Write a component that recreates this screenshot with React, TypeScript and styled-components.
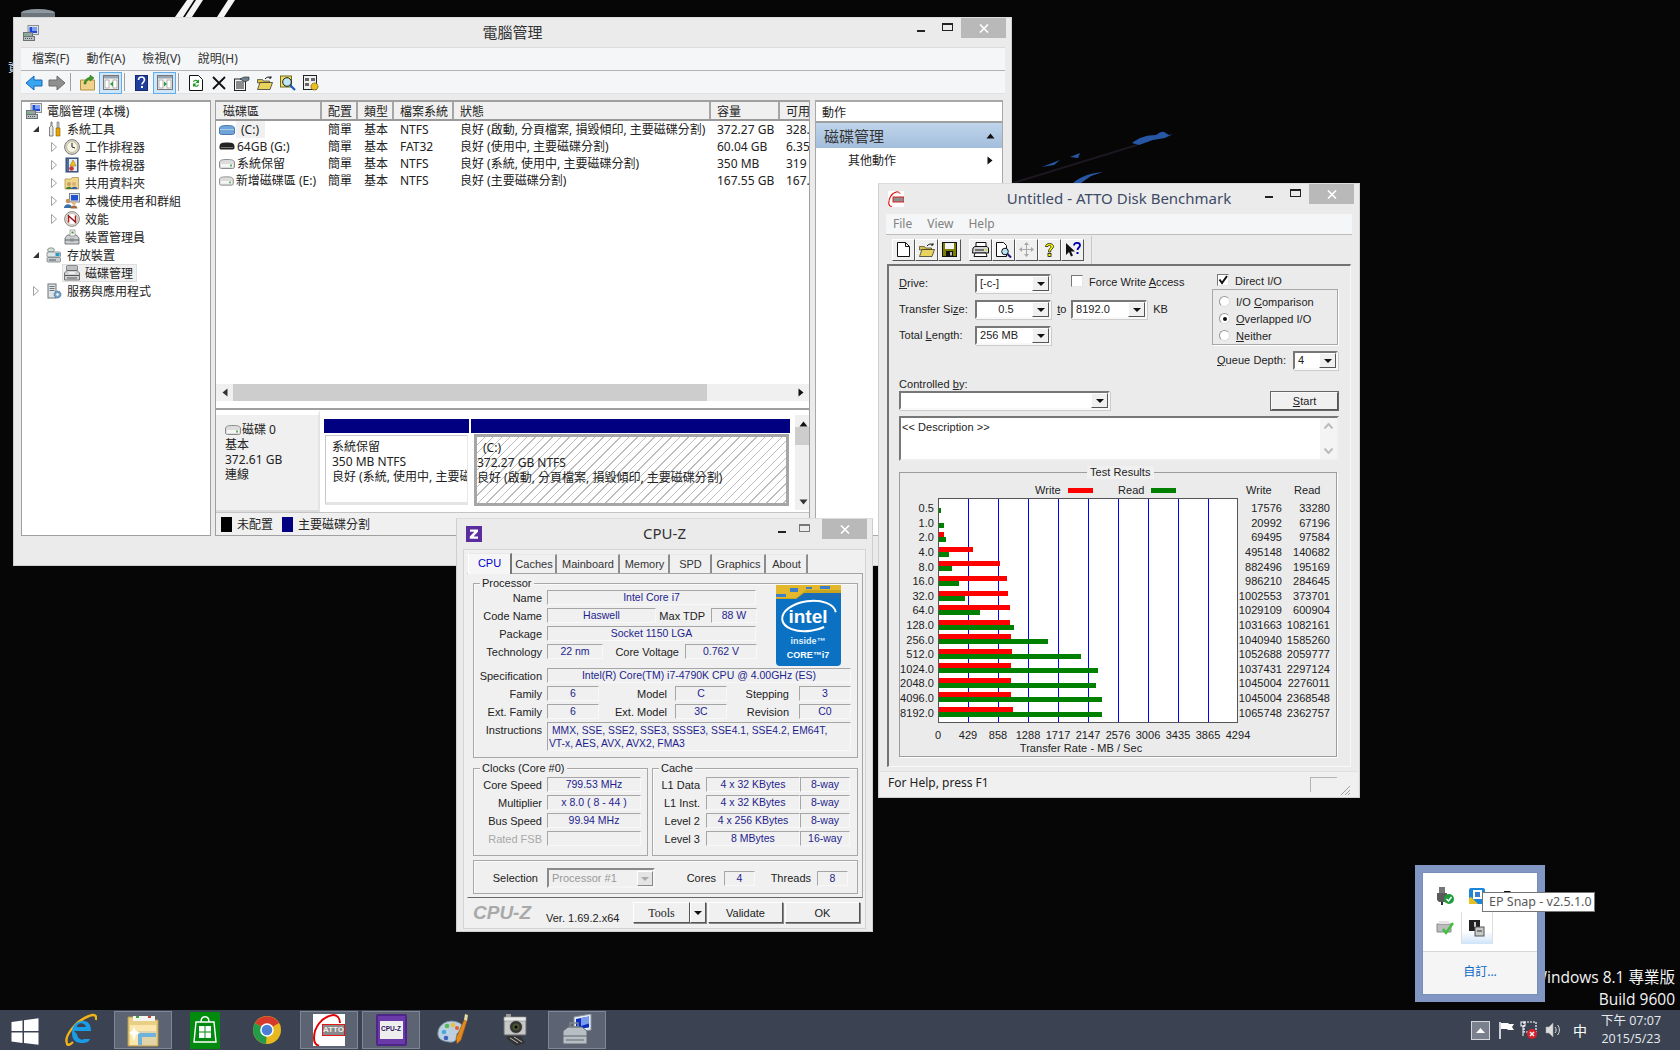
import React from "react";
import styled, { createGlobalStyle } from "styled-components";

const UI = `"Noto Sans", "Noto Sans CJK TC", sans-serif`;
const ARIAL = `"Liberation Sans", "Noto Sans CJK TC", sans-serif`;

const Global = createGlobalStyle`
  html, body { margin: 0; padding: 0; background: #050505; }
  body { font-family: ${UI}; overflow: hidden; }
  * { box-sizing: border-box; }
`;

const Desktop = styled.div`
  position: relative; width: 1680px; height: 1050px; overflow: hidden; background: #060606;
`;
const Wallpaper = styled.svg`position: absolute; inset: 0;`;
const DesktopLabel = styled.span`
  position: absolute; left: 8px; top: 58px; font-size: 12px; color: #dfe8ff;
`;
const Edition = styled.div`
  position: absolute; right: 5px; top: 966px; text-align: right; color: #f4f4f4;
  font-size: 15.5px; line-height: 22px; font-family: "Open Sans", "Noto Sans CJK TC", sans-serif;
`;

/* ---------- window chrome ---------- */
const Frame = styled.section<{ $x: number; $y: number; $w: number; $h: number }>`
  position: absolute; left: ${p => p.$x}px; top: ${p => p.$y}px; width: ${p => p.$w}px; height: ${p => p.$h}px;
  background: #ebebeb; border: 1px solid #cfcfcf; border-top-color: #dcdcdc; display: flex; flex-direction: column;
`;
const TitleBar = styled.header`
  height: 29px; flex: none; display: grid; grid-template-columns: 1fr auto 1fr; align-items: start;
`;
const TitleIcon = styled.div`padding: 6px 0 0 9px; height: 29px;`;
const TitleText = styled.h1<{ $color?: string; $size?: number }>`
  margin: 0; font-weight: 400; font-size: ${p => p.$size ?? 15}px; line-height: 29px; color: ${p => p.$color ?? "#333"};
`;
const ControlRow = styled.div`display: flex; justify-content: flex-end; align-items: flex-start; padding-right: 5px;`;
const CtlBtn = styled.div<{ $w: number }>`
  width: ${p => p.$w}px; height: 20px; display: flex; align-items: center; justify-content: center;
`;
const MinGlyph = styled.i`display: block; width: 8px; height: 2px; background: #222; margin-top: 6px;`;
const MaxGlyph = styled.i<{ $soft?: boolean }>`
  display: block; width: 11px; height: 8px; margin-top: -3px; border: 1px solid ${p => p.$soft ? "#777" : "#222"};
  border-top-width: 2px;
`;
const CloseBtn = styled.div<{ $gap?: number }>`
  width: 45px; height: 20px; margin-left: ${p => p.$gap ?? 0}px; background: #b9b9b9;
  display: flex; align-items: center; justify-content: center;
`;

const Controls = ({ compact, }: { compact?: boolean }) => (
  <ControlRow>
    <CtlBtn $w={compact ? 22 : 27}><MinGlyph /></CtlBtn>
    <CtlBtn $w={compact ? 22 : 27}><MaxGlyph $soft={compact} /></CtlBtn>
    <CloseBtn $gap={compact ? 7 : 0}>
      <svg width="10" height="9" viewBox="0 0 10 9"><path d="M1 .5 9 8.5M9 .5 1 8.5" stroke="#fff" strokeWidth="1.6" /></svg>
    </CloseBtn>
  </ControlRow>
);

/* ---------- icons ---------- */
type Ic = { s?: number };
const CompIcon = ({ s = 16 }: Ic) => (
  <svg width={s} height={s} viewBox="0 0 16 16">
    <rect x="5" y="0.5" width="10.5" height="9" fill="#dfe3e8" stroke="#8a8f96" />
    <rect x="6.5" y="2" width="7.5" height="6" fill="#1f49d8" />
    <rect x="9" y="2" width="5" height="4" fill="#7fa0ee" />
    <rect x="0.5" y="7.5" width="9" height="4" fill="#9aa4a8" stroke="#6a7478" />
    <rect x="0.5" y="11.5" width="11" height="4" fill="#b8bfc2" stroke="#6a7478" />
    <path d="M2 13.5h8" stroke="#555" strokeDasharray="1 1" />
    <rect x="1.5" y="9" width="2" height="1.5" fill="#4c4" />
  </svg>
);
const ToolsIcon = () => (
  <svg width="16" height="16" viewBox="0 0 16 16">
    <path d="M5 1v4l-1.5 1v9H7V6L6 5V1z" fill="#e8e8e8" stroke="#666" strokeWidth=".8" />
    <path d="M11 1h2v6h-2z" fill="#c9c9c9" stroke="#666" strokeWidth=".6" />
    <path d="M10 7h4v8h-4z" fill="#e6a400" stroke="#8a6000" strokeWidth=".6" />
  </svg>
);
const ClockIcon = () => (
  <svg width="16" height="16" viewBox="0 0 16 16">
    <circle cx="8" cy="8" r="7.4" fill="#d9d9d0" stroke="#7b7b7b" />
    <circle cx="8" cy="8" r="5.4" fill="#f5f5ea" stroke="#b0a060" strokeWidth=".6" />
    <path d="M8 4v4l3 1" fill="none" stroke="#222" />
  </svg>
);
const EventIcon = () => (
  <svg width="16" height="16" viewBox="0 0 16 16">
    <rect x="2" y="1" width="12" height="14" fill="#4f6d9e" stroke="#2e466e" />
    <rect x="5" y="2" width="8" height="12" fill="#e6e9f2" />
    <path d="M9 3 12 9H6z" fill="#f2c218" stroke="#8c6c08" strokeWidth=".5" />
    <circle cx="7.5" cy="11.5" r="2.3" fill="#d23434" />
  </svg>
);
const SharedIcon = () => (
  <svg width="16" height="16" viewBox="0 0 16 16">
    <path d="M1 4h6l1-1.5h6.5V14H1z" fill="#f0d68a" stroke="#b2964c" strokeWidth=".8" />
    <circle cx="5" cy="9" r="2" fill="#c8a060" /><path d="M2 14c0-3 6-3 6 0z" fill="#3a7d3a" />
    <circle cx="10" cy="9" r="2" fill="#d8b078" /><path d="M7.5 14c0-3 6-3 6 0z" fill="#3a5da8" />
  </svg>
);
const UsersIcon = () => (
  <svg width="16" height="16" viewBox="0 0 16 16">
    <rect x="5.5" y="0.5" width="10" height="8.5" fill="#dce2ea" stroke="#7c8790" />
    <rect x="7" y="2" width="7" height="5.5" fill="#2152cf" />
    <circle cx="4" cy="8" r="2.3" fill="#c9925c" /><path d="M0 15c0-5 8-5 8 0z" fill="#3c6ea8" />
    <circle cx="10" cy="10" r="2" fill="#e2b280" /><path d="M6.5 15.5c0-4 7-4 7 0z" fill="#a26a38" />
  </svg>
);
const PerfIcon = () => (
  <svg width="16" height="16" viewBox="0 0 16 16">
    <circle cx="8" cy="8" r="7.4" fill="#dfdfd5" stroke="#8a8a80" />
    <circle cx="8" cy="8" r="5.5" fill="#fff" stroke="#999" strokeWidth=".5" />
    <path d="M4.5 11.5V4.8L11.5 11V4.5" fill="none" stroke="#c01818" strokeWidth="1.5" />
    <path d="M4 4 12 12" stroke="#2a2a2a" strokeWidth=".7" />
  </svg>
);
const DevIcon = () => (
  <svg width="16" height="16" viewBox="0 0 16 16">
    <path d="M1 9 3.5 6h9L15 9v6H1z" fill="#cbcfd2" stroke="#5d6367" strokeWidth=".8" />
    <path d="M1 11h14" stroke="#5d6367" />
    <rect x="6" y="1" width="5" height="6" fill="#fafafa" stroke="#888" strokeWidth=".7" />
    <rect x="7.5" y="2.5" width="2" height="2" fill="#3b983b" />
    <rect x="6" y="9.5" width="4" height="3" fill="#8b9093" />
  </svg>
);
const StorageIcon = () => (
  <svg width="16" height="16" viewBox="0 0 16 16">
    <ellipse cx="5" cy="3" rx="3.5" ry="2.2" fill="#cfe0d2" stroke="#6f7c72" strokeWidth=".7" />
    <rect x="1" y="5" width="13.5" height="5" rx="1" fill="#dfe4e6" stroke="#68747a" strokeWidth=".7" />
    <rect x="9.5" y="6" width="4" height="3" fill="#2b9ac8" />
    <rect x="1" y="10.5" width="13.5" height="4.5" rx="1" fill="#c9ced0" stroke="#68747a" strokeWidth=".7" />
    <path d="M3 13h7" stroke="#556" />
  </svg>
);
const DiskMgmtIcon = () => (
  <svg width="16" height="16" viewBox="0 0 16 16">
    <rect x="2.5" y="0.5" width="11" height="5.5" rx="1" fill="#bcc0c2" stroke="#666" strokeWidth=".7" />
    <path d="M.5 8 3 5.5h10L15.5 8v7H.5z" fill="#ced2d4" stroke="#555" strokeWidth=".8" />
    <path d="M1 10.5h14M3 13h10" stroke="#555" />
    <rect x="5" y="7" width="6" height="2" fill="#f0f0f0" />
  </svg>
);
const ServicesIcon = () => (
  <svg width="16" height="16" viewBox="0 0 16 16">
    <rect x="2" y="1" width="8" height="14" fill="#dfe3e6" stroke="#6c7478" />
    <path d="M3.5 3.5h5M3.5 5.5h5M3.5 7.5h5" stroke="#6a7479" />
    <circle cx="11.5" cy="11.5" r="3.4" fill="#7aa3c6" stroke="#3f6f94" strokeDasharray="1.4 .7" />
    <circle cx="11.5" cy="11.5" r="1.2" fill="#fff" />
  </svg>
);
const DiskBlue = () => (
  <svg width="16" height="10" viewBox="0 0 16 10">
    <path d="M.5 4C.5 1 3 .5 8 .5s7.500 .5 7.500 3.500V8c0 1-1 1.500-2 1.500H2.500C1.500 9.500.5 9 .5 8z" fill="#70a4d8" stroke="#4a7bb0" />
    <path d="M1 4.500h14" stroke="#a8ccec" />
  </svg>
);
const DiskBlack = () => (
  <svg width="16" height="10" viewBox="0 0 16 10">
    <path d="M.5 5C.5 1 3 .5 8 .5s7.500 .5 7.500 4.500v1c0 .8-1 1.500-2 1.500H2.500C1.500 7.500.5 7 .5 6z" fill="#222" />
    <path d="M2 5.500h12" stroke="#777" />
  </svg>
);
const DiskGray = () => (
  <svg width="16" height="10" viewBox="0 0 16 10">
    <path d="M.5 4C.5 1 3 .5 8 .5s7.500 .5 7.500 3.500V8c0 1-1 1.500-2 1.500H2.500C1.500 9.500.5 9 .5 8z" fill="#dcdcdc" stroke="#8c8c8c" />
    <rect x="2" y="5" width="12" height="3" fill="#f5f5f5" />
    <rect x="11" y="5.500" width="2" height="2" fill="#57b957" />
  </svg>
);

const ArrowBack = ({ dim }: { dim?: boolean }) => (
  <svg width="18" height="16" viewBox="0 0 18 16">
    {dim
      ? <path d="M1 5h8V1l8 7-8 7v-4H1z" fill="#8f8f8f" stroke="#6c6c6c" />
      : <path d="M17 5H9V1L1 8l8 7v-4h8z" fill="#39a6f0" stroke="#1566b6" />}
  </svg>
);
const UpFolder = () => (
  <svg width="15" height="16" viewBox="0 0 15 16">
    <path d="M.5 5h14v10H.5z" fill="#f0d28a" stroke="#b39242" />
    <path d="M4 9c0-4 3-6 6-7V0l4 3-4 3V4c-3 1-4 3-4 5z" fill="#3c9a2a" stroke="#216d12" strokeWidth=".5" />
  </svg>
);
const PanelIcon = ({ right }: { right?: boolean }) => (
  <svg width="16" height="15" viewBox="0 0 16 15">
    <rect x=".5" y=".5" width="15" height="14" fill="#f3f3f3" stroke="#777" />
    <rect x="1" y="1" width="14" height="2.500" fill="#9aa4b0" />
    <rect x="2" y="5" width="4" height="8" fill="#fff" stroke="#888" strokeWidth=".6" />
    <rect x="10" y="5" width="4" height="8" fill="#fff" stroke="#888" strokeWidth=".6" />
    <path d={right ? "M7 6.500 10 9l-3 2.500z" : "M10 6.500 7 9l3 2.500z"} fill="#29a03a" />
  </svg>
);
const HelpBook = () => (
  <svg width="13" height="16" viewBox="0 0 13 16">
    <rect x=".5" y=".5" width="12" height="15" fill="#1f3f9f" stroke="#14286a" />
    <path d="M3.500 5c0-4 6-4 6 0 0 2-2.500 2.500-2.500 4.500" fill="none" stroke="#fff" strokeWidth="1.600" />
    <rect x="6" y="11" width="2" height="2" fill="#fff" />
  </svg>
);
const RefreshDoc = () => (
  <svg width="14" height="16" viewBox="0 0 14 16">
    <path d="M.5.5h9l4 4v11H.5z" fill="#fff" stroke="#111" />
    <path d="M4 7a3 3 0 0 1 5-1.500l1-1v3.500H6.500L8 6.500a2 2 0 0 0-3 .5zM10 9.500a3 3 0 0 1-5 1.500l-1 1V8.500h3.500L6 10a2 2 0 0 0 3-.5z" fill="#1e9a1e" />
  </svg>
);
const CrossIcon = () => (
  <svg width="14" height="14" viewBox="0 0 14 14"><path d="M1 1 13 13M13 1 1 13" stroke="#111" strokeWidth="1.800" /></svg>
);
const PropsIcon = () => (
  <svg width="16" height="16" viewBox="0 0 16 16">
    <rect x=".5" y="4" width="11" height="11.500" fill="#f5f5f5" stroke="#222" />
    <path d="M2 7h8M2 9h8M2 11h8M2 13h8" stroke="#222" />
    <path d="M6 4 10 2h5v3l-4 2z" fill="#6e7f8f" stroke="#222" strokeWidth=".6" />
  </svg>
);
const OpenFolder = () => (
  <svg width="16" height="14" viewBox="0 0 16 14">
    <path d="M.5 3.500h5l1 1.500h6v2H.5z" fill="#d8c24a" stroke="#222" strokeWidth=".6" />
    <path d="M.5 13.500 3 6.500h12.500l-2.500 7z" fill="#e8d45c" stroke="#222" strokeWidth=".7" />
    <path d="M8 3c1.500-2 4-2.500 6-1.500M14 .3v1.800h-2" fill="none" stroke="#111" />
  </svg>
);
const FindIcon = () => (
  <svg width="16" height="16" viewBox="0 0 16 16">
    <rect x="0.5" y="1" width="11" height="11" fill="#f0e060" stroke="#6d6a20" />
    <circle cx="7" cy="7" r="4.300" fill="#bfe6f7" stroke="#1a1a1a" />
    <path d="M10 10 15 15" stroke="#1c5bbb" strokeWidth="2.200" />
  </svg>
);
const GearDoc = () => (
  <svg width="16" height="16" viewBox="0 0 16 16">
    <rect x=".5" y=".5" width="13" height="14" fill="#f0f0f0" stroke="#222" />
    <path d="M2 3h4v3H2zM8 3h4v3H8zM2 8h4v3H2z" fill="#666" />
    <circle cx="11.500" cy="11.500" r="3.500" fill="#e8c020" stroke="#6e5a08" strokeDasharray="1.300 .6" />
  </svg>
);
const NewDoc = () => (
  <svg width="13" height="15" viewBox="0 0 13 15"><path d="M.5.5h8l4 4v10H.5z" fill="#fff" stroke="#111" /><path d="M8.500.5v4h4" fill="none" stroke="#111" /></svg>
);
const SaveDisk = () => (
  <svg width="15" height="15" viewBox="0 0 15 15">
    <rect x=".5" y=".5" width="14" height="14" fill="#7d7d00" stroke="#111" />
    <rect x="3" y="1" width="9" height="6" fill="#f4f4f4" />
    <rect x="4" y="9" width="7" height="5.500" fill="#111" />
    <rect x="8" y="10" width="2" height="3.500" fill="#bcbcbc" />
  </svg>
);
const PrintIcon = () => (
  <svg width="17" height="15" viewBox="0 0 17 15">
    <path d="M4 .5h10v4H4z" fill="#fff" stroke="#111" />
    <path d="M1 6 3 4.500h12L16.500 6v5h-16z" fill="#d4d4d4" stroke="#111" />
    <path d="M3 11h11l1 3.500H2z" fill="#fff" stroke="#111" />
    <path d="M3 8h9" stroke="#111" /><rect x="13" y="7" width="2" height="1.500" fill="#d7d700" />
  </svg>
);
const PreviewIcon = () => (
  <svg width="16" height="16" viewBox="0 0 16 16">
    <path d="M.5.5h7l3 3v11H.5z" fill="#fff" stroke="#111" />
    <circle cx="9" cy="9.500" r="3.300" fill="#b9e4f5" stroke="#111" />
    <path d="M11.500 12 15 15.500" stroke="#1a1a7a" strokeWidth="2" />
  </svg>
);
const MoveIcon = () => (
  <svg width="15" height="15" viewBox="0 0 15 15">
    <path d="M7.500 0 10 3H5zM7.500 15 5 12h5zM0 7.500 3 5v5zM15 7.500 12 10V5zM7 3h1v9H7zM3 7h9v1H3z" fill="#a8a8a8" />
  </svg>
);
const QIcon = () => (
  <svg width="11" height="15" viewBox="0 0 11 15">
    <path d="M1.500 4.500C1.500.5 9.500.5 9.500 4.500c0 2.500-3 2.500-3 5.500H4.500C4.500 6.500 7 6 7 4.500c0-1.500-3-1.500-3 0z" fill="#ffff00" stroke="#111" strokeWidth=".8" />
    <rect x="4" y="11.500" width="3" height="3" fill="#ffff00" stroke="#111" strokeWidth=".8" />
  </svg>
);
const WhatsThis = () => (
  <svg width="16" height="15" viewBox="0 0 16 15">
    <path d="M1 1v12l3-3 2 4.500 2-1-2-4h4z" fill="#111" />
    <path d="M9 3.500c0-3.500 6-3.500 6 0 0 2-2.500 2-2.500 4.500" fill="none" stroke="#0000aa" strokeWidth="1.800" />
    <rect x="11.500" y="10" width="2" height="2" fill="#0000aa" />
  </svg>
);
const AttoSmall = () => (
  <svg width="16" height="16" viewBox="0 0 16 16">
    <rect width="16" height="16" fill="#fff" />
    <path d="M9 .8C3 2 .5 8 .8 12.500c.2 2 1.500 3 3 3" fill="none" stroke="#e00000" strokeWidth="1.100" />
    <path d="M9 .8c2 .2 3 1 3 2" fill="none" stroke="#e00000" />
    <rect x="5" y="6" width="11" height="5" fill="#8c8c8c" stroke="#d92020" />
  </svg>
);
const ZIcon = () => (
  <svg width="16" height="16" viewBox="0 0 16 16">
    <rect width="16" height="16" fill="#5b2c9d" />
    <path d="M4 3.500h8v2.200L7.500 10.500H12v2.200H3.800v-2.200L8.300 5.700H4z" fill="#fff" />
  </svg>
);

/* taskbar icons */
const WinLogo = () => (
  <svg width="28" height="27" viewBox="0 0 28 27">
    <path d="M.5 4 11.500 2.500v10.500H.5zM13 2.300 27.500.3V13H13zM.5 14.500h11v10.500L.5 23.500zM13 14.500h14.500v12.300L13 25z" fill="#fff" />
  </svg>
);
const IEIcon = () => (
  <svg width="32" height="34" viewBox="0 0 32 34">
    <path d="M2 30C-1 24 10 8 24 3c5-2 8-1 7 4" fill="none" stroke="#f0b418" strokeWidth="2.400" />
    <path d="M8 29c-3 3-6 4-6 1" fill="none" stroke="#f0b418" strokeWidth="2.400" />
    <path d="M9 18h17c0-7-3-10-8-10-6 0-11 4-11 12s5 10 10 10c4 0 7-1 8-4h-6c-1 1-3 1-4 0-2-1-3-3-3-5zM12 14c0-5 8-5 9 0z" fill="#1b9ce6" fillRule="evenodd" />
  </svg>
);
const FolderIcon = () => (
  <svg width="34" height="34" viewBox="0 0 34 34">
    <path d="M2 4h12l2 3h16v26H2z" fill="#e9cf83" stroke="#b29a4d" />
    <rect x="7" y="3" width="22" height="5" fill="#f5f5f0" />
    <rect x="10" y="3" width="3" height="2" fill="#34a843" /><rect x="22" y="3" width="3" height="2" fill="#d04030" />
    <path d="M4 12h26v20H4z" fill="#fbe7ae" />
    <path d="M12 18h18v14H12z" fill="#e0d4a8" />
    <path d="M12 20h18v4H16v8h-4z" fill="#6fb2dc" />
    <path d="M8 14l2 4 4 2-4 2-2 6-2-6-3-2 3-2z" fill="#fff" opacity=".9" />
  </svg>
);
const StoreIcon = () => (
  <svg width="30" height="37" viewBox="0 0 30 37">
    <rect width="30" height="37" fill="#028a0f" />
    <path d="M6 10h18l2 20H4z" fill="none" stroke="#fff" strokeWidth="1.400" />
    <path d="M11 10c0-7 8-7 8 0" fill="none" stroke="#fff" strokeWidth="1.400" />
    <path d="M9 14h5.500v5.500H9zM15.500 14H21v5.500h-5.500zM9 20.500h5.500V26H9zM15.500 20.500H21V26h-5.500z" fill="#fff" />
  </svg>
);
const ChromeIcon = () => (
  <svg width="28" height="28" viewBox="0 0 28 28">
    <circle cx="14" cy="14" r="14" fill="#e8b820" />
    <path d="M14 14 2 7a14 14 0 0 1 24 0z" fill="#d5392c" />
    <path d="M14 14 2 7a14 14 0 0 0 11 21z" fill="#249b48" />
    <circle cx="14" cy="14" r="6.800" fill="#fff" />
    <circle cx="14" cy="14" r="5.300" fill="#4a7fd8" />
  </svg>
);
const AttoBig = styled.div`
  position: relative; width: 32px; height: 32px; background: #fff;
`;
const AttoSwoosh = styled.svg`position: absolute; left: 0; top: 0;`;
const AttoTag = styled.span`
  position: absolute; left: 9px; top: 10px; width: 23px; height: 12px; background: #8a8a8a; border: 1.500px solid #e01818;
  color: #eee; font: 700 8px/9px ${ARIAL}; text-align: center;
`;
const CpuChip = styled.div`
  width: 31px; height: 32px; background: #6a3ba8; border-radius: 2px; display: flex; align-items: center; justify-content: center;
  border: 2px solid #4d2687;
`;
const CpuChipInner = styled.span`
  background: #eee; color: #2c1260; font: 700 6.500px/16px ${ARIAL}; height: 18px; width: 23px; text-align: center; white-space: nowrap;
`;
const PaintIcon = () => (
  <svg width="34" height="34" viewBox="0 0 34 34">
    <path d="M2 19C3 11 12 6 21 9c7 2 8 9 3 10-4 1-3 3-3 5s-2 6-8 5C6 28 1 26 2 19z" fill="#bcd0e0" stroke="#7c90a4" />
    <circle cx="8" cy="19" r="2.300" fill="#4aa8e0" /><circle cx="11" cy="13" r="2.300" fill="#58b858" />
    <circle cx="17" cy="12" r="2.300" fill="#e8c040" /><circle cx="10" cy="25" r="2.300" fill="#4060c0" />
    <circle cx="21" cy="15" r="2" fill="#e06030" />
    <path d="M20 25 28 7l3 1-6 19-4 4z" fill="#e08a20" stroke="#8c5210" strokeWidth=".6" />
    <path d="M28 7l1-6 3 1-1 6z" fill="#e8dca0" />
  </svg>
);
const CameraIcon = () => (
  <svg width="24" height="34" viewBox="0 0 24 34">
    <rect x="1" y="4" width="22" height="18" rx="1" fill="#c8c8c8" stroke="#666" />
    <rect x="1" y="4" width="22" height="4" fill="#e8e8e8" stroke="#777" strokeWidth=".5" />
    <circle cx="13" cy="14" r="6.500" fill="#333" stroke="#bbb" />
    <circle cx="13" cy="14" r="3.500" fill="#4b5530" /><circle cx="13" cy="14" r="1.500" fill="#000" />
    <rect x="3" y="1" width="5" height="3" fill="#999" />
    <path d="M4 23h14l4 7-9 3-9-7z" fill="#333" /><path d="M7 25l8 5M11 24l8 5" stroke="#bbb" />
  </svg>
);
const MgmtBig = () => (
  <svg width="32" height="32" viewBox="0 0 32 32">
    <path d="M13 3 30 0v16l-17 2z" fill="#e8edf2" stroke="#8a96a4" />
    <path d="M15 5 28 2.500v11L15 15z" fill="#0a2cc0" />
    <path d="M20 4 28 2.500v7L20 12z" fill="#7a9cec" />
    <path d="M2 17 7 13h14l5 4v13H2z" fill="#b7bec4" stroke="#5f686f" />
    <path d="M2 22h24M5 26h18" stroke="#5f686f" />
    <rect x="9" y="9" width="8" height="4" fill="none" stroke="#7c858c" strokeWidth="1.500" />
  </svg>
);

/* ---------- management console ---------- */
const ConsoleBody = styled.div`flex: 1; display: flex; flex-direction: column; padding: 0 6px 0 7px;`;
const MenuBar = styled.nav`
  height: 24px; background: #f5f6f7; border-bottom: 1px solid #b4b4b4; display: flex; align-items: center;
  gap: 17px; padding-left: 11px; font-size: 12px; color: #333; flex: none;
  border-top: 1px solid #dcdcdc;
`;
const MenuItem = styled.span`line-height: 22px;`;
const Toolbar = styled.div`
  height: 23px; background: #f5f6f7; border-bottom: 1px solid #e2e2e2; display: flex; align-items: center; padding-left: 1px; flex: none;
`;
const ToolSlot = styled.div<{ $active?: boolean }>`
  width: 23px; height: 22px; margin-top: 1px; display: flex; align-items: center; justify-content: center;
  ${p => p.$active ? "background: #cfe6fa; outline: 1px solid #63aee8; outline-offset: -1px;" : ""}
`;
const ToolSep = styled.i`display: block; width: 1px; height: 18px; background: #a0a0a0; margin: 0 5px 0 2px;`;
const Panes = styled.div`
  height: 436px; margin-top: 6px; display: grid; grid-template-columns: 190px 595px 189px; column-gap: 4px; flex: none;
`;
const TreePane = styled.aside`
  background: #fff; border: 1px solid #a0a0a0; border-top-width: 2px; padding-top: 0; font-size: 12px; color: #222; overflow: hidden;
`;
const TreeRow = styled.div<{ $pad: number }>`
  height: 18px; display: flex; align-items: center; padding-left: ${p => p.$pad}px; white-space: nowrap;
`;
const TreeArrow = styled.span`
  width: 15px; height: 18px; flex: none; display: flex; align-items: center; padding-left: 2px;
`;
const TreeLabel = styled.span<{ $sel?: boolean }>`
  display: flex; align-items: center; gap: 5px; height: 18px;
  ${p => p.$sel ? "background: #f0f0f0; outline: 1px solid #dedede; outline-offset: -1px; padding-right: 4px; margin-left: -2px; padding-left: 2px;" : ""}
`;
const Expanded = () => <svg width="6" height="6" viewBox="0 0 6 6"><path d="M6 0v6H0z" fill="#333" /></svg>;
const Collapsed = () => <svg width="6" height="10" viewBox="0 0 6 10"><path d="M.5.500 5.500 5 .5 9.500z" fill="#fff" stroke="#a0a0a0" /></svg>;

const tree: [number, "open" | "closed" | "none" | "root", React.ReactNode, string][] = [
  [4, "root", <CompIcon />, "電腦管理 (本機)"],
  [9, "open", <ToolsIcon />, "系統工具"],
  [27, "closed", <ClockIcon />, "工作排程器"],
  [27, "closed", <EventIcon />, "事件檢視器"],
  [27, "closed", <SharedIcon />, "共用資料夾"],
  [27, "closed", <UsersIcon />, "本機使用者和群組"],
  [27, "closed", <PerfIcon />, "效能"],
  [27, "none", <DevIcon />, "裝置管理員"],
  [9, "open", <StorageIcon />, "存放裝置"],
  [27, "none", <DiskMgmtIcon />, "磁碟管理"],
  [9, "closed", <ServicesIcon />, "服務與應用程式"],
];

const MidPane = styled.main`
  background: #fff; border: 1px solid #a0a0a0; border-top-width: 2px; display: flex; flex-direction: column; overflow: hidden; font-size: 12px; color: #222;
`;
const listCols = "105px 36px 36px 60px 257px 69px 1fr";
const ListHeader = styled.div`
  display: grid; grid-template-columns: ${listCols}; height: 19px; flex: none;
  border-bottom: 2px solid #9a9a9a; background: #f0f0f0; padding-left: 1px;
`;
const HeadCell = styled.div`
  padding-left: 6px; line-height: 19px; border-right: 2px solid #a6a6a6; white-space: nowrap; overflow: hidden;
  &:last-child { border-right: 0; }
`;
const ListRows = styled.div`flex: 1; padding: 0 0 0 1px;`;
const ListRow = styled.div`display: grid; grid-template-columns: ${listCols}; height: 17px; line-height: 17px;`;
const Cell = styled.div`padding-left: 6px; white-space: nowrap; overflow: hidden;`;
const NameCell = styled.div`display: flex; align-items: center; gap: 1px; padding-left: 2px; white-space: nowrap;`;
const NameText = styled.span<{ $sel?: boolean }>`
  padding: 0 6px 0 ${p => p.$sel ? 5 : 1}px; ${p => p.$sel ? "background: #f0f0f0;" : ""}
`;
const HScroll = styled.div`
  height: 17px; flex: none; background: #f0f0f0; display: flex; align-items: center; margin-bottom: 7px; border-bottom: 0;
`;
const ScrollBtn = styled.div`
  width: 17px; height: 17px; display: flex; align-items: center; justify-content: center;
`;
const HTrack = styled.div`flex: 1; height: 17px;`;
const HThumb = styled.div`width: 474px; height: 17px; background: #cdcdcd;`;
const LowerArea = styled.div`
  height: 104px; flex: none; display: flex; border-top: 2px solid #9f9f9f; background: #fff; padding: 0;
`;
const DiskInfo = styled.div`
  width: 104px; flex: none; background: #f0f0f0; border-right: 2px solid #e4e4e4; border-top: 5px solid #fff;
  border-bottom: 2px solid #dcdcdc; padding: 7px 0 0 9px; line-height: 15px;
`;
const DiskName = styled.div`display: flex; align-items: center; gap: 1px; margin-bottom: 0;`;
const Partitions = styled.div`
  flex: none; width: 466px; margin-left: 4px; padding-top: 9px; display: grid; grid-template-columns: 145px 319px; column-gap: 2px;
`;
const Partition = styled.div`display: flex; flex-direction: column;`;
const NavyBar = styled.div`height: 14px; background: #000080; flex: none;`;
const PartSystem = styled.div`
  margin: 2px 1px 0 1px; height: 70px; background: #fff; border: 1px solid #c8c8c8; border-right-color: #e8e8e8; border-bottom: 3px solid #e4e4e4;
  padding: 3px 0 0 6px; line-height: 15px; white-space: nowrap; overflow: hidden;
`;
const PartBoot = styled.div`
  margin: 1px 1px 0 3px; height: 72px; border: 3px solid #a6a6a6; padding: 3px 0 0 0; line-height: 15px; white-space: nowrap;
  background: repeating-linear-gradient(135deg, #fff 0 5px, #bdbdbd 5px 6px);
`;
const DriveLine = styled.div`padding-left: 6px;`;
const VScroll = styled.div`
  width: 16px; margin-left: 5px; flex: none; background: #f0f0f0; display: flex; flex-direction: column; margin-top: 5px; height: 95px;
`;
const VThumb = styled.div`height: 18px; background: #cdcdcd; margin-top: -5px;`;
const VTrack = styled.div`flex: 1;`;
const Legend = styled.div`
  height: 23px; flex: none; background: #f0f0f0; border-top: 1px solid #c4c4c4; display: flex; align-items: center; padding-left: 5px; gap: 5px;
`;
const Swatch = styled.i<{ $c: string }>`display: block; width: 11px; height: 15px; background: ${p => p.$c};`;
const LegendText = styled.span`margin-right: 4px;`;

const ActionPane = styled.aside`
  background: #fff; border: 1px solid #a8a8a8; border-top-width: 2px; font-size: 12px; color: #222; overflow: hidden; margin-left: 1px;
`;
const ActionHead = styled.div`height: 21px; line-height: 21px; padding-left: 6px; border-bottom: 2px solid #a0a0a0;`;
const ActionBand = styled.div`
  height: 25px; display: flex; justify-content: space-between; align-items: center; padding: 0 7px 0 8px; font-size: 15px;
  background: linear-gradient(#bfd5ec, #a3bddb); color: #333;
`;
const ActionItem = styled.div`
  height: 24px; display: flex; justify-content: space-between; align-items: center; padding: 0 9px 0 32px;
`;

/* ---------- CPU-Z ---------- */
const CpuClient = styled.div`
  flex: 1; margin: 1px 6px 2px 6px; border: 1px solid #d4d4d4; background: #f0f0f0; padding: 2px 2px 0 3px;
  font: 11px/14px ${ARIAL}; color: #222; display: flex; flex-direction: column;
`;
const TabStrip = styled.div`display: flex; height: 21px; align-items: flex-end; padding-left: 1px; flex: none; position: relative; z-index: 1;`;
const Tab = styled.div<{ $w: number; $on?: boolean }>`
  width: ${p => p.$w}px; text-align: center; height: ${p => p.$on ? 21 : 19}px; line-height: ${p => p.$on ? 18 : 19}px;
  margin-right: 1px; border-right: 2px solid ${p => p.$on ? "#777" : "#8c8c8c"};
  border-top: 1px solid #e8e8e8; color: ${p => p.$on ? "#0000d0" : "#333"}; background: ${p => p.$on ? "#f6f6f6" : "#f0f0f0"};
  ${p => p.$on ? "margin-bottom: -1px; border-left: 1px solid #fff;" : ""}
`;
const TabPanel = styled.div`
  height: 325px; flex: none; border: 1px solid #a4a4a4; border-bottom-color: #666; border-left: 1px solid #eee; padding: 9px 4px 0 5px;
  display: flex; flex-direction: column; gap: 0;
`;
const Group = styled.div<{ $h: number; $w?: number; $mt?: number }>`
  position: relative; height: ${p => p.$h}px; ${p => p.$w ? `width: ${p.$w}px; flex: none;` : ""}
  margin-top: ${p => p.$mt ?? 0}px; border: 1px solid #a8a8a8; box-shadow: inset 1px 1px 0 #fafafa;
`;
const GroupTitle = styled.span<{ $l: number }>`
  position: absolute; left: ${p => p.$l}px; top: -8px; background: #f0f0f0; padding: 0 2px; line-height: 14px; font-size: 11px; color: #222;
`;
const TopBlock = styled.div`height: 84px; display: flex; align-items: flex-start; padding-top: 1px;`;
const TopFields = styled.div`width: 285px; flex: none; padding-top: 5px; display: flex; flex-direction: column;`;
const IntelBadge = styled.svg`flex: none; margin-left: 17px;`;
const Row = styled.div<{ $h?: number }>`height: ${p => p.$h ?? 18}px; display: flex; align-items: flex-start;`;
const Lab = styled.span<{ $w: number; $gap?: number; $dim?: boolean }>`
  width: ${p => p.$w}px; flex: none; text-align: right; margin-right: ${p => p.$gap ?? 5}px; line-height: 17px; white-space: nowrap;
  color: ${p => p.$dim ? "#a8a8a8" : "#222"};
`;
const Field = styled.div<{ $w: number; $h?: number }>`
  width: ${p => p.$w}px; height: ${p => p.$h ?? 15}px; flex: none; border: 1px solid; border-color: #a6a6a6 #f8f8f8 #f8f8f8 #a6a6a6;
  text-align: center; color: #1e1e8e; font-size: 10.500px; line-height: 13px; white-space: nowrap; overflow: hidden;
`;
const InstrField = styled(Field)`
  text-align: left; padding: 1px 0 0 1px; white-space: nowrap; font-size: 10.300px; line-height: 13px;
`;
const InstrFirst = styled.span`display: block; padding-left: 3px;`;
const InstrSecond = styled.span`display: block;`;
const SpecRows = styled.div`display: flex; flex-direction: column;`;
const ClockRow = styled.div`display: flex; gap: 4px; margin-top: 10px;`;
const GroupRows = styled.div`padding-top: 8px; display: flex; flex-direction: column;`;
const SelectionRow = styled.div`display: flex; align-items: center; height: 32px; padding-top: 2px;`;
const SelectBox = styled.div`
  width: 108px; height: 20px; flex: none; border: 2px solid #8a8a8a; border-right-color: #f5f5f5; border-bottom-color: #f5f5f5;
  color: #999; padding-left: 3px; line-height: 17px; display: flex; justify-content: space-between;
`;
const SelectDrop = styled.span`
  width: 16px; height: 15px; margin: 1px 0; background: #e4e4e4; border: 1px solid; border-color: #fff #888 #888 #fff; display: flex; align-items: center; justify-content: center;
`;
const CpuFooter = styled.div`flex: 1; display: flex; align-items: flex-start;`;
const CpuBrand = styled.span`
  font: italic 700 19px/24px ${ARIAL}; color: #a9a9a9; width: 73px; margin-left: 6px; flex: none; padding-top: 3px; white-space: nowrap;
`;
const CpuVersion = styled.span`width: 87px; flex: none; padding-top: 13px; line-height: 15px;`;
const RaisedBtn = styled.div<{ $w: number; $serif?: boolean; $ml?: number }>`
  width: ${p => p.$w}px; height: 21px; margin-top: 4px; margin-left: ${p => p.$ml ?? 0}px; flex: none; text-align: center; line-height: 18px; color: #222; background: #f0f0f0;
  border: 1px solid; border-color: #fff #555 #555 #fff; box-shadow: 1px 1px 0 #888;
  font-family: ${p => p.$serif ? `"Liberation Serif", serif` : ARIAL}; font-size: ${p => p.$serif ? 12 : 11}px;
  display: flex; align-items: center; justify-content: center;
`;
const Tri = styled.i`display: block; width: 0; height: 0; border-left: 4px solid transparent; border-right: 4px solid transparent; border-top: 4px solid #111;`;
const TriSoft = styled(Tri)`border-top-color: #aaa;`;

/* ---------- ATTO ---------- */
const AttoMenu = styled.nav`
  margin: 1px 7px 0 7px; height: 21px; flex: none; background: #f5f6f7; display: flex; align-items: center; gap: 15px; padding-left: 7px;
  color: #818181; font: 12px/20px ${UI}; border-bottom: 1px solid #bdbdbd;
`;
const AttoTools = styled.div`
  margin: 0 8px; height: 29px; flex: none; display: flex; align-items: center; padding-left: 5px; gap: 0; position: relative;
`;
const AttoToolBtn = styled.div`
  width: 23px; height: 22px; display: flex; align-items: center; justify-content: center; background: #f0f0f0;
  border: 1px solid; border-color: #fff #555 #555 #fff;
`;
const AttoToolGap = styled.i`display: block; width: 8px;`;
const AttoToolEnd = styled.i`display: block; width: 1px; height: 28px; background: #c8c8c8; margin-left: 7px;`;
const AttoClient = styled.div`
  margin: 0 8px 0 8px; height: 503px; flex: none; border: 2px solid #737373; border-right: 1px solid #f8f8f8; border-bottom: 1px solid #f8f8f8;
  padding: 7px 11px 0 10px; font: 11px/14px ${ARIAL}; color: #222; letter-spacing: .05px;
`;
const FormTop = styled.div`display: flex; height: 97px;`;
const FormLeft = styled.div`width: 313px; flex: none; display: flex; flex-direction: column; gap: 7px; padding-top: 1px;`;
const FormRow = styled.div`display: flex; align-items: flex-start; height: 19px;`;
const FormLabel = styled.span<{ $w: number }>`width: ${p => p.$w}px; flex: none; line-height: 18px; white-space: nowrap;`;
const Combo = styled.div<{ $w: number; $center?: boolean }>`
  width: ${p => p.$w}px; height: 19px; flex: none; background: #fff; border: 2px solid; border-color: #777 #f8f8f8 #f8f8f8 #777;
  box-shadow: 1px 1px 0 #ccc; display: flex; align-items: center; justify-content: space-between; line-height: 15px;
`;
const ComboText = styled.span<{ $center?: boolean }>`flex: 1; padding-left: 3px; ${p => p.$center ? "text-align: center;" : ""} overflow: hidden;`;
const ComboBtn = styled.span`
  width: 17px; height: 15px; flex: none; background: #f0f0f0; border: 1px solid; border-color: #fff #555 #555 #fff; display: flex; align-items: center; justify-content: center;
`;
const Check = styled.span<{ $on?: boolean }>`
  width: 12px; height: 12px; flex: none; background: #fff; border: 1px solid; border-color: #777 #e6e6e6 #e6e6e6 #777; display: flex; align-items: center; justify-content: center;
`;
const CheckLine = styled.div<{ $ml?: number }>`
  display: flex; align-items: flex-start; gap: 6px; margin-left: ${p => p.$ml ?? 0}px; line-height: 14px; padding-top: 1px; white-space: nowrap;
`;
const FormRight = styled.div`width: 126px; margin-left: 0; flex: none; display: flex; flex-direction: column;`;
const DirectRow = styled.div`height: 16px; padding-left: 5px;`;
const RadioBox = styled.div`
  height: 57px; border: 1px solid #a8a8a8; padding: 5px 0 0 6px; display: flex; flex-direction: column; gap: 3px; box-shadow: 1px 1px 0 #fff;
`;
const RadioLine = styled.div`display: flex; align-items: center; gap: 6px; height: 14px; white-space: nowrap;`;
const Radio = styled.span<{ $on?: boolean }>`
  width: 11px; height: 11px; flex: none; border-radius: 50%; background: #fff; border: 1px solid #999; border-bottom-color: #ddd; border-right-color: #ddd; position: relative;
  ${p => p.$on ? `&::after { content: ""; position: absolute; left: 3px; top: 3px; width: 4px; height: 4px; border-radius: 50%; background: #111; }` : ""}
`;
const QueueRow = styled.div`display: flex; align-items: flex-start; margin-top: 6px; padding-left: 5px;`;
const CtlLabel = styled.div`height: 14px; line-height: 14px; margin-top: 7px;`;
const CtlRow = styled.div`display: flex; justify-content: space-between; height: 20px; align-items: flex-start;`;
const StartBtn = styled.div`
  width: 69px; height: 20px; border: 2px solid; border-color: #f8f8f8 #555 #555 #f8f8f8; outline: 1px solid #666; outline-offset: -1px;
  text-align: center; line-height: 16px; background: #f0f0f0;
`;
const DescBox = styled.div`
  margin-top: 5px; height: 45px; border: 2px solid; border-color: #777 #eee #eee #777; background: #fff; padding: 0 0 0 1px; display: flex; justify-content: space-between; line-height: 18px;
`;
const DescScroll = styled.div`
  width: 17px; background: #f4f4f4; display: flex; flex-direction: column; justify-content: space-between; align-items: center; padding: 5px 0;
`;
const Results = styled.div`
  position: relative; margin-top: 11px; width: 438px; height: 285px; border: 1px solid #9c9c9c; box-shadow: 1px 1px 0 #fff;
  display: flex; flex-direction: column; font-size: 11px;
`;
const ResultsTitle = styled.span`
  position: absolute; left: 187px; top: -7px; background: #f0f0f0; padding: 0 3px; line-height: 13px;
`;
const ChartHead = styled.div`height: 25px; padding: 9px 0 0 135px; display: flex; align-items: center; flex: none; line-height: 14px;`;
const HeadLabel = styled.span<{ $w: number }>`width: ${p => p.$w}px; flex: none;`;
const KeyBar = styled.i<{ $c: string; $w: number }>`
  display: block; width: 25px; height: 5px; background: ${p => p.$c}; margin-right: ${p => p.$w}px; flex: none;
`;
const ChartBody = styled.div`display: flex; height: 225px; flex: none;`;
const RowAxis = styled.div<{ $w: number; $gap?: number }>`
  width: ${p => p.$w}px; flex: none; margin-right: ${p => p.$gap ?? 0}px; display: grid; grid-template-rows: repeat(15, 1fr); padding: 3px 0;
  text-align: right; align-items: center; line-height: 14px;
`;
const Plot = styled.svg`flex: none; display: block;`;
const AxisRow = styled.div`display: grid; grid-template-columns: repeat(11, 30px); height: 14px; margin: 5px 0 0 23px; text-align: center; line-height: 14px;`;
const AxisCaption = styled.div`text-align: center; height: 13px; line-height: 13px; width: 362px;`;
const AttoStatus = styled.footer`
  flex: 1; margin: 0 1px; border-top: 1px solid #e0e0e0; background: #f0f0f0; display: flex; align-items: center; justify-content: space-between;
  padding: 0 0 4px 8px; font-size: 12px; color: #222; position: relative; margin-top: 4px;
`;
const StatusPanel = styled.div`width: 27px; height: 15px; border: 1px solid #b4b4b4; border-bottom: 0; border-right: 0; margin-right: 21px; margin-top: 4px;`;
const Grip = styled.svg`position: absolute; right: 8px; bottom: 2px;`;

/* ---------- tray popup & taskbar ---------- */
const TrayPopup = styled.div`
  position: absolute; left: 1415px; top: 865px; width: 130px; height: 137px; background: #ffffff; border: 7px solid #8296c4;
  display: flex; flex-direction: column; outline: 1px solid #7a8db8; outline-offset: -8px;
`;
const TrayGrid = styled.div`
  height: 79px; flex: none; display: grid; grid-template-columns: repeat(3, 32px); grid-template-rows: repeat(2, 32px); padding: 8px 0 0 7px; justify-content: start;
`;
const TrayCell = styled.div<{ $sel?: boolean }>`
  display: flex; align-items: center; justify-content: center;
  ${p => p.$sel ? `background: linear-gradient(transparent 60%, #cfe4f8); border-left: 1px solid #ddd; border-right: 1px solid #ddd;` : ""}
`;
const TrayFoot = styled.div`
  flex: 1; background: #f5f5f5; border-top: 1px solid #d8d8d8; text-align: center; padding-top: 11px; color: #0a68c8; font-size: 12px; line-height: 18px;
`;
const Tooltip = styled.div`
  position: absolute; left: 1482px; top: 892px; width: 113px; height: 20px; background: #fff; border: 1px solid #767676;
  font-size: 12.500px; line-height: 18px; color: #575757; padding-left: 6px; white-space: nowrap; overflow: hidden;
`;
const Taskbar = styled.footer`
  position: absolute; left: 0; bottom: 0; width: 1680px; height: 40px; background: #3b4353; display: flex; align-items: center; color: #fff;
`;
const StartSlot = styled.div`width: 50px; height: 40px; flex: none; display: flex; align-items: center; justify-content: center; padding-top: 2px;`;
const TaskSlot = styled.div<{ $on?: boolean }>`
  width: 58px; height: 38px; margin: 1px 2px; flex: none; display: flex; align-items: center; justify-content: center;
  ${p => p.$on ? "background: #5c6373; border: 1px solid #818695;" : ""}
`;
const Spacer = styled.div`flex: 1;`;
const TrayExpand = styled.div`
  width: 19px; height: 19px; flex: none; background: #7a808e; border: 1px solid #d4d6dc; margin-right: 6px; display: flex; align-items: center; justify-content: center;
`;
const TrayIcon = styled.div<{ $w: number }>`width: ${p => p.$w}px; height: 40px; flex: none; display: flex; align-items: center; justify-content: center; font-size: 14px;`;
const Clock = styled.div`
  width: 74px; margin-right: 12px; text-align: center; flex: none; font-size: 12.500px; line-height: 18px; color: #e8eaee;
  font-family: "Open Sans", "Noto Sans CJK TC", sans-serif;
`;

/* ---------- data ---------- */
const sizes = ["0.5","1.0","2.0","4.0","8.0","16.0","32.0","64.0","128.0","256.0","512.0","1024.0","2048.0","4096.0","8192.0"];
const writes = [17576,20992,69495,495148,882496,986210,1002553,1029109,1031663,1040940,1052688,1037431,1045004,1045004,1065748];
const reads = [33280,67196,97584,140682,195169,284645,373701,600904,1082161,1585260,2059777,2297124,2276011,2368548,2362757];
const ticks = ["0","429","858","1288","1717","2147","2576","3006","3435","3865","4294"];
const scale = (v: number) => Math.round(v * 6.9e-5);

const rows = [
  { icon: <DiskBlue />, name: "(C:)", sel: true, t: "NTFS", status: "良好 (啟動, 分頁檔案, 損毀傾印, 主要磁碟分割)", cap: "372.27 GB", free: "328.45" },
  { icon: <DiskBlack />, name: "64GB (G:)", t: "FAT32", status: "良好 (使用中, 主要磁碟分割)", cap: "60.04 GB", free: "6.35 GB" },
  { icon: <DiskGray />, name: "系統保留", t: "NTFS", status: "良好 (系統, 使用中, 主要磁碟分割)", cap: "350 MB", free: "319 MB" },
  { icon: <DiskGray />, name: "新增磁碟區 (E:)", t: "NTFS", status: "良好 (主要磁碟分割)", cap: "167.55 GB", free: "167.45" },
];

const UpTri = () => <svg width="9" height="6" viewBox="0 0 9 6"><path d="M4.500 .5 8.500 5.500H.5z" fill="#111" /></svg>;
const DnTri = () => <svg width="9" height="6" viewBox="0 0 9 6"><path d="M.5 .5h8L4.500 5.500z" fill="#333" /></svg>;
const LtTri = () => <svg width="6" height="9" viewBox="0 0 6 9"><path d="M5.500.5v8L.5 4.500z" fill="#333" /></svg>;
const RtTri = () => <svg width="6" height="9" viewBox="0 0 6 9"><path d="M.5.5v8L5.500 4.500z" fill="#111" /></svg>;

const ConsoleWindow = () => (
  <Frame $x={13} $y={17} $w={999} $h={549}>
    <TitleBar>
      <TitleIcon><CompIcon /></TitleIcon>
      <TitleText>電腦管理</TitleText>
      <Controls />
    </TitleBar>
    <ConsoleBody>
      <MenuBar>
        <MenuItem>檔案(F)</MenuItem><MenuItem>動作(A)</MenuItem><MenuItem>檢視(V)</MenuItem><MenuItem>說明(H)</MenuItem>
      </MenuBar>
      <Toolbar>
        <ToolSlot><ArrowBack /></ToolSlot><ToolSlot><ArrowBack dim /></ToolSlot><ToolSep />
        <ToolSlot><UpFolder /></ToolSlot><ToolSlot $active><PanelIcon /></ToolSlot><ToolSep />
        <ToolSlot><HelpBook /></ToolSlot><ToolSlot $active><PanelIcon right /></ToolSlot><ToolSep />
        <ToolSlot><RefreshDoc /></ToolSlot><ToolSlot><CrossIcon /></ToolSlot><ToolSlot><PropsIcon /></ToolSlot>
        <ToolSlot><OpenFolder /></ToolSlot><ToolSlot><FindIcon /></ToolSlot><ToolSlot><GearDoc /></ToolSlot>
      </Toolbar>
      <Panes>
        <TreePane>
          {tree.map(([pad, kind, icon, text], i) => (
            <TreeRow key={i} $pad={pad}>
              {kind !== "root" && (
                <TreeArrow>{kind === "open" ? <Expanded /> : kind === "closed" ? <Collapsed /> : null}</TreeArrow>
              )}
              <TreeLabel $sel={i === 9}>{icon}<span>{text}</span></TreeLabel>
            </TreeRow>
          ))}
        </TreePane>
        <MidPane>
          <ListHeader>
            {["磁碟區","配置","類型","檔案系統","狀態","容量","可用"].map(h => <HeadCell key={h}>{h}</HeadCell>)}
          </ListHeader>
          <ListRows>
            {rows.map((r, i) => (
              <ListRow key={i}>
                <NameCell>{r.icon}<NameText $sel={r.sel}>{r.name}</NameText></NameCell>
                <Cell>簡單</Cell><Cell>基本</Cell><Cell>{r.t}</Cell>
                <Cell>{r.status}</Cell><Cell>{r.cap}</Cell><Cell>{r.free}</Cell>
              </ListRow>
            ))}
          </ListRows>
          <HScroll>
            <ScrollBtn><LtTri /></ScrollBtn>
            <HTrack><HThumb /></HTrack>
            <ScrollBtn><RtTri /></ScrollBtn>
          </HScroll>
          <LowerArea>
            <DiskInfo>
              <DiskName><DiskGray />磁碟 0</DiskName>
              <div>基本</div><div>372.61 GB</div><div>連線</div>
            </DiskInfo>
            <Partitions>
              <Partition>
                <NavyBar />
                <PartSystem>系統保留<br />350 MB NTFS<br />良好 (系統, 使用中, 主要磁碟分割)</PartSystem>
              </Partition>
              <Partition>
                <NavyBar />
                <PartBoot><DriveLine>(C:)</DriveLine>372.27 GB NTFS<br />良好 (啟動, 分頁檔案, 損毀傾印, 主要磁碟分割)</PartBoot>
              </Partition>
            </Partitions>
            <VScroll>
              <ScrollBtn><UpTri /></ScrollBtn><VThumb /><VTrack /><ScrollBtn><DnTri /></ScrollBtn>
            </VScroll>
          </LowerArea>
          <Legend>
            <Swatch $c="#000" /><LegendText>未配置</LegendText>
            <Swatch $c="#000080" /><LegendText>主要磁碟分割</LegendText>
          </Legend>
        </MidPane>
        <ActionPane>
          <ActionHead>動作</ActionHead>
          <ActionBand>磁碟管理<UpTri /></ActionBand>
          <ActionItem>其他動作<RtTri /></ActionItem>
        </ActionPane>
      </Panes>
    </ConsoleBody>
  </Frame>
);

const IntelLogo = () => (
  <IntelBadge width="65" height="81" viewBox="0 0 65 81">
    <rect width="65" height="81" rx="4" fill="#0a71c3" />
    <rect width="65" height="14" fill="#c9a420" />
    <path d="M0 0h65v5H30l-10 8H0z" fill="#e4b82c" />
    <path d="M0 9h10v3H0zM14 3h8v4h-8zM30 2h6v2h-6zM44 1h10v3H44z" fill="#3a7fc8" />
    <path d="M0 14h20l8-6h37v6z" fill="#1a6db8" />
    <ellipse cx="33" cy="31" rx="27" ry="15" fill="none" stroke="#fff" strokeWidth="2" transform="rotate(-8 33 31)" strokeDasharray="130 28" strokeDashoffset="-20" />
    <text x="32" y="38" textAnchor="middle" fill="#fff" fontFamily={ARIAL} fontWeight="700" fontSize="19">intel</text>
    <text x="32" y="59" textAnchor="middle" fill="#dfeefa" fontFamily={ARIAL} fontWeight="700" fontSize="9">inside™</text>
    <text x="32" y="73" textAnchor="middle" fill="#fff" fontFamily={ARIAL} fontWeight="700" fontSize="9">CORE™i7</text>
  </IntelBadge>
);

const tabs: [string, number][] = [["Caches",44],["Mainboard",62],["Memory",49],["SPD",41],["Graphics",53],["About",41]];

const CpuWindow = () => (
  <Frame $x={456} $y={518} $w={417} $h={414}>
    <TitleBar>
      <TitleIcon><ZIcon /></TitleIcon>
      <TitleText>CPU-Z</TitleText>
      <Controls compact />
    </TitleBar>
    <CpuClient>
      <TabStrip>
        <Tab $w={44} $on>CPU</Tab>
        {tabs.map(([t, w]) => <Tab key={t} $w={w}>{t}</Tab>)}
      </TabStrip>
      <TabPanel>
        <Group $h={175}>
          <GroupTitle $l={6}>Processor</GroupTitle>
          <TopBlock>
            <TopFields>
              <Row><Lab $w={68}>Name</Lab><Field $w={209}>Intel Core i7</Field></Row>
              <Row><Lab $w={68}>Code Name</Lab><Field $w={109}>Haswell</Field><Lab $w={49} $gap={6}>Max TDP</Lab><Field $w={46}>88 W</Field></Row>
              <Row><Lab $w={68}>Package</Lab><Field $w={209}>Socket 1150 LGA</Field></Row>
              <Row><Lab $w={68}>Technology</Lab><Field $w={56}>22 nm</Field><Lab $w={76} $gap={6}>Core Voltage</Lab><Field $w={72}>0.762 V</Field></Row>
            </TopFields>
            <IntelLogo />
          </TopBlock>
          <SpecRows>
            <Row><Lab $w={68}>Specification</Lab><Field $w={304}>Intel(R) Core(TM) i7-4790K CPU @ 4.00GHz (ES)</Field></Row>
            <Row><Lab $w={68}>Family</Lab><Field $w={52}>6</Field><Lab $w={68} $gap={8}>Model</Lab><Field $w={52}>C</Field><Lab $w={62} $gap={10}>Stepping</Lab><Field $w={52}>3</Field></Row>
            <Row><Lab $w={68}>Ext. Family</Lab><Field $w={52}>6</Field><Lab $w={68} $gap={8}>Ext. Model</Lab><Field $w={52}>3C</Field><Lab $w={62} $gap={10}>Revision</Lab><Field $w={52}>C0</Field></Row>
            <Row $h={29}>
              <Lab $w={68}>Instructions</Lab>
              <InstrField $w={304} $h={29}><InstrFirst>MMX, SSE, SSE2, SSE3, SSSE3, SSE4.1, SSE4.2, EM64T,</InstrFirst><InstrSecond>VT-x, AES, AVX, AVX2, FMA3</InstrSecond></InstrField>
            </Row>
          </SpecRows>
        </Group>
        <ClockRow>
          <Group $h={88} $w={175}>
            <GroupTitle $l={6}>Clocks (Core #0)</GroupTitle>
            <GroupRows>
              <Row><Lab $w={68}>Core Speed</Lab><Field $w={94}>799.53 MHz</Field></Row>
              <Row><Lab $w={68}>Multiplier</Lab><Field $w={94}>x 8.0 ( 8 - 44 )</Field></Row>
              <Row><Lab $w={68}>Bus Speed</Lab><Field $w={94}>99.94 MHz</Field></Row>
              <Row><Lab $w={68} $dim>Rated FSB</Lab><Field $w={94}></Field></Row>
            </GroupRows>
          </Group>
          <Group $h={88} $w={206}>
            <GroupTitle $l={6}>Cache</GroupTitle>
            <GroupRows>
              <Row><Lab $w={47} $gap={6}>L1 Data</Lab><Field $w={94}>4 x 32 KBytes</Field><Field $w={50}>8-way</Field></Row>
              <Row><Lab $w={47} $gap={6}>L1 Inst.</Lab><Field $w={94}>4 x 32 KBytes</Field><Field $w={50}>8-way</Field></Row>
              <Row><Lab $w={47} $gap={6}>Level 2</Lab><Field $w={94}>4 x 256 KBytes</Field><Field $w={50}>8-way</Field></Row>
              <Row><Lab $w={47} $gap={6}>Level 3</Lab><Field $w={94}>8 MBytes</Field><Field $w={50}>16-way</Field></Row>
            </GroupRows>
          </Group>
        </ClockRow>
        <Group $h={34} $mt={4}>
          <SelectionRow>
            <Lab $w={64} $gap={9}>Selection</Lab>
            <SelectBox>Processor #1<SelectDrop><TriSoft /></SelectDrop></SelectBox>
            <Lab $w={61} $gap={8}>Cores</Lab><Field $w={31}>4</Field>
            <Lab $w={56} $gap={6}>Threads</Lab><Field $w={31}>8</Field>
          </SelectionRow>
        </Group>
      </TabPanel>
      <CpuFooter>
        <CpuBrand>CPU-Z</CpuBrand>
        <CpuVersion>Ver. 1.69.2.x64</CpuVersion>
        <RaisedBtn $w={57} $serif>Tools</RaisedBtn>
        <RaisedBtn $w={16}><Tri /></RaisedBtn>
        <RaisedBtn $w={75} $ml={2}>Validate</RaisedBtn>
        <RaisedBtn $w={75} $ml={2}>OK</RaisedBtn>
      </CpuFooter>
    </CpuClient>
  </Frame>
);

const ComboArrow = () => <ComboBtn><Tri /></ComboBtn>;

const AttoWindow = () => (
  <Frame $x={878} $y={183} $w={482} $h={615}>
    <TitleBar>
      <TitleIcon><AttoSmall /></TitleIcon>
      <TitleText $color="#3d4a66" $size={15}>Untitled - ATTO Disk Benchmark</TitleText>
      <Controls />
    </TitleBar>
    <AttoMenu><span>File</span><span>View</span><span>Help</span></AttoMenu>
    <AttoTools>
      <AttoToolBtn><NewDoc /></AttoToolBtn><AttoToolBtn><OpenFolder /></AttoToolBtn><AttoToolBtn><SaveDisk /></AttoToolBtn>
      <AttoToolGap />
      <AttoToolBtn><PrintIcon /></AttoToolBtn><AttoToolBtn><PreviewIcon /></AttoToolBtn><AttoToolBtn><MoveIcon /></AttoToolBtn>
      <AttoToolBtn><QIcon /></AttoToolBtn><AttoToolBtn><WhatsThis /></AttoToolBtn>
      <AttoToolEnd />
    </AttoTools>
    <AttoClient>
      <FormTop>
        <FormLeft>
          <FormRow>
            <FormLabel $w={76}><u>D</u>rive:</FormLabel>
            <Combo $w={76}><ComboText>[-c-]</ComboText><ComboArrow /></Combo>
            <CheckLine $ml={20}><Check /><span>Force Write <u>A</u>ccess</span></CheckLine>
          </FormRow>
          <FormRow>
            <FormLabel $w={76}>Transfer Si<u>z</u>e:</FormLabel>
            <Combo $w={76}><ComboText $center>0.5</ComboText><ComboArrow /></Combo>
            <FormLabel $w={20}>&nbsp;&nbsp;<u>t</u>o</FormLabel>
            <Combo $w={76}><ComboText>8192.0</ComboText><ComboArrow /></Combo>
            <FormLabel $w={30}>&nbsp;&nbsp;KB</FormLabel>
          </FormRow>
          <FormRow>
            <FormLabel $w={76}>Total <u>L</u>ength:</FormLabel>
            <Combo $w={76}><ComboText>256 MB</ComboText><ComboArrow /></Combo>
          </FormRow>
        </FormLeft>
        <FormRight>
          <DirectRow>
            <CheckLine>
              <Check><svg width="10" height="10" viewBox="0 0 10 10"><path d="M1.500 4.500 4 8l5-7" fill="none" stroke="#111" strokeWidth="2" /></svg></Check>
              <span>Direct I/O</span>
            </CheckLine>
          </DirectRow>
          <RadioBox>
            <RadioLine><Radio /><span>I/O <u>C</u>omparison</span></RadioLine>
            <RadioLine><Radio $on /><span><u>O</u>verlapped I/O</span></RadioLine>
            <RadioLine><Radio /><span><u>N</u>either</span></RadioLine>
          </RadioBox>
          <QueueRow>
            <FormLabel $w={76}><u>Q</u>ueue Depth:</FormLabel>
            <Combo $w={45}><ComboText>4</ComboText><ComboArrow /></Combo>
          </QueueRow>
        </FormRight>
      </FormTop>
      <CtlLabel>Controlled <u>b</u>y:</CtlLabel>
      <CtlRow>
        <Combo $w={211}><ComboText /><ComboArrow /></Combo>
        <StartBtn><u>S</u>tart</StartBtn>
      </CtlRow>
      <DescBox>
        <span>&lt;&lt; Description &gt;&gt;</span>
        <DescScroll><svg width="9" height="6" viewBox="0 0 9 6"><path d="M.5 5.500 4.500 1l4 4.500" fill="none" stroke="#bbb" strokeWidth="2" /></svg><svg width="9" height="6" viewBox="0 0 9 6"><path d="M.5.500 4.500 5l4-4.500" fill="none" stroke="#bbb" strokeWidth="2" /></svg></DescScroll>
      </DescBox>
      <Results>
        <ResultsTitle>Test Results</ResultsTitle>
        <ChartHead>
          <HeadLabel $w={33}>Write</HeadLabel><KeyBar $c="#ff0000" $w={25} />
          <HeadLabel $w={33}>Read</HeadLabel><KeyBar $c="#008000" $w={70} />
          <HeadLabel $w={48}>Write</HeadLabel><HeadLabel $w={30}>Read</HeadLabel>
        </ChartHead>
        <ChartBody>
          <RowAxis $w={34} $gap={4}>{sizes.map(s => <span key={s}>{s}</span>)}</RowAxis>
          <Plot width="300" height="225" viewBox="0 0 300 225" shapeRendering="crispEdges">
            <rect width="300" height="225" fill="#fff" />
            {Array.from({ length: 9 }, (_, i) => <rect key={i} x={30 * (i + 1)} y="0" width="1" height="225" fill="#0000ff" />)}
            {writes.map((v, i) => scale(v) >= 2 && <rect key={i} x="1" y={Math.round(5.2 + 14.55 * i)} width={scale(v)} height="5" fill="#ff0000" />)}
            {reads.map((v, i) => <rect key={i} x="1" y={Math.round(10.2 + 14.55 * i)} width={Math.max(scale(v), 1)} height="5" fill="#008000" />)}
            <path d="M.5 224.500V.5h299v224z" fill="none" stroke="#555" />
          </Plot>
          <RowAxis $w={44}>{writes.map(v => <span key={v}>{v}</span>)}</RowAxis>
          <RowAxis $w={48}>{reads.map(v => <span key={v}>{v}</span>)}</RowAxis>
        </ChartBody>
        <AxisRow>{ticks.map(t => <span key={t}>{t}</span>)}</AxisRow>
        <AxisCaption>Transfer Rate - MB / Sec</AxisCaption>
      </Results>
    </AttoClient>
    <AttoStatus>
      For Help, press F1
      <StatusPanel />
      <Grip width="10" height="10" viewBox="0 0 10 10"><path d="M10 1 1 10M10 5 5 10M10 8 8 10" stroke="#a0a0a0" /></Grip>
    </AttoStatus>
  </Frame>
);

const FlagIcon = () => (
  <svg width="16" height="17" viewBox="0 0 16 17"><path d="M1 0v17" stroke="#fff" strokeWidth="1.500" /><path d="M2 1h7l1 1h5l-2 3 2 3H9L8 7H2z" fill="#fff" /></svg>
);
const NetIcon = () => (
  <svg width="18" height="18" viewBox="0 0 18 18">
    <rect x="4" y="1" width="12" height="10" fill="none" stroke="#fff" strokeWidth="1.200" strokeDasharray="2 1" />
    <rect x="1" y="1" width="4" height="4" fill="none" stroke="#fff" /><path d="M3 5v10" stroke="#fff" />
    <circle cx="12" cy="13" r="5" fill="#d8202c" />
    <path d="M10 11 14 15M14 11 10 15" stroke="#fff" strokeWidth="1.400" />
  </svg>
);
const SpeakerIcon = () => (
  <svg width="17" height="16" viewBox="0 0 17 16">
    <path d="M1 5h3l4-4v14l-4-4H1z" fill="#dcdcdc" stroke="#aaa" strokeWidth=".5" />
    <path d="M10 5c1.500 1.500 1.500 4.500 0 6M12.500 3c2.500 2.500 2.500 7.500 0 10" fill="none" stroke="#ddd" />
  </svg>
);
const UsbCheck = () => (
  <svg width="18" height="20" viewBox="0 0 18 20">
    <rect x="3" y="1" width="6" height="6" fill="#777" /><path d="M1 7h10v7l-2 2H3l-2-2z" fill="#5a5a5a" /><rect x="5" y="16" width="2" height="3" fill="#333" />
    <circle cx="13" cy="13" r="5" fill="#1f9c3b" /><path d="M10.500 13l2 2 3-4" fill="none" stroke="#fff" strokeWidth="1.400" />
  </svg>
);
const EpSnap = () => (
  <svg width="16" height="16" viewBox="0 0 16 16">
    <rect width="16" height="16" rx="2" fill="#1c86d8" />
    <rect x="4" y="2" width="9" height="9" fill="#fff" /><rect x="6" y="4" width="5" height="5" fill="#3a7fc8" />
    <path d="M0 16 9 16 2 9 0 10z" fill="#e8c020" />
  </svg>
);
const PrinterCheck = () => (
  <svg width="18" height="16" viewBox="0 0 18 16">
    <path d="M1 4h14v8H1z" fill="#bcbcbc" stroke="#888" /><rect x="3" y="1" width="10" height="3" fill="#e6e6e6" />
    <path d="M7 9l3 4 7-10" fill="none" stroke="#3fbf3f" strokeWidth="2.400" />
  </svg>
);
const BlackApp = () => (
  <svg width="16" height="18" viewBox="0 0 16 18">
    <rect x="0" y="1" width="11" height="11" fill="#222" /><path d="M5 3h2v5H5z" fill="#ccc" />
    <rect x="6" y="8" width="9" height="9" fill="#c8c8c8" stroke="#555" /><path d="M8 12h5" stroke="#333" />
  </svg>
);

export default function App() {
  return (
    <Desktop>
      <Global />
      <Wallpaper width="1680" height="1050" viewBox="0 0 1680 1050">
        <ellipse cx="38" cy="13" rx="17" ry="4" fill="#8e98a0" />
        <path d="M21 13h34v6H21z" fill="#6d757c" />
        <path d="M175 17h8l11-17h-7zM185 17h7l11-17h-7zM217 17h7l11-17h-7z" fill="#f4f4f4" />
        <path d="M1013 183 1137 145" stroke="#1c1620" strokeWidth="2" />
        <path d="M1132 143c6-5 14-8 24-8 3-2 6-4 8-3l5 3 4-1-8 4-12 2-14 5zM1042 167l10-4 8-3-6 5zM1070 157l10-4-2 5zM1073 183c8-7 18-10 30-11l-12 4-10 7z" fill="#2756a4" />
      </Wallpaper>
      <DesktopLabel>資</DesktopLabel>
      <Edition>Windows 8.1 專業版<br />Build 9600</Edition>
      <ConsoleWindow />
      <CpuWindow />
      <AttoWindow />
      <TrayPopup>
        <TrayGrid>
          <TrayCell><UsbCheck /></TrayCell>
          <TrayCell><EpSnap /></TrayCell>
          <TrayCell><svg width="12" height="12" viewBox="0 0 12 12"><path d="M1 1h6l4 4v7H1z" fill="#111" /></svg></TrayCell>
          <TrayCell><PrinterCheck /></TrayCell>
          <TrayCell $sel><BlackApp /></TrayCell>
        </TrayGrid>
        <TrayFoot>自訂...</TrayFoot>
      </TrayPopup>
      <Tooltip>EP Snap - v2.5.1.0</Tooltip>
      <Taskbar>
        <StartSlot><WinLogo /></StartSlot>
        <TaskSlot><IEIcon /></TaskSlot>
        <TaskSlot $on><FolderIcon /></TaskSlot>
        <TaskSlot><StoreIcon /></TaskSlot>
        <TaskSlot><ChromeIcon /></TaskSlot>
        <TaskSlot $on>
          <AttoBig>
            <AttoSwoosh width="32" height="32" viewBox="0 0 32 32"><path d="M20 1C8 3 1 14 1 24c0 4 2 7 5 8" fill="none" stroke="#e40000" strokeWidth="2" /><path d="M20 1c4 0 7 3 7 8" fill="none" stroke="#e40000" strokeWidth="2" /></AttoSwoosh>
            <AttoTag>ATTO</AttoTag>
          </AttoBig>
        </TaskSlot>
        <TaskSlot $on><CpuChip><CpuChipInner>CPU-Z</CpuChipInner></CpuChip></TaskSlot>
        <TaskSlot><PaintIcon /></TaskSlot>
        <TaskSlot><CameraIcon /></TaskSlot>
        <TaskSlot $on><MgmtBig /></TaskSlot>
        <Spacer />
        <TrayExpand><svg width="9" height="5" viewBox="0 0 9 5"><path d="M0 5 4.500 0 9 5z" fill="#fff" /></svg></TrayExpand>
        <TrayIcon $w={22}><FlagIcon /></TrayIcon>
        <TrayIcon $w={22}><NetIcon /></TrayIcon>
        <TrayIcon $w={26}><SpeakerIcon /></TrayIcon>
        <TrayIcon $w={28}>中</TrayIcon>
        <Clock>下午 07:07<br />2015/5/23</Clock>
      </Taskbar>
    </Desktop>
  );
}
